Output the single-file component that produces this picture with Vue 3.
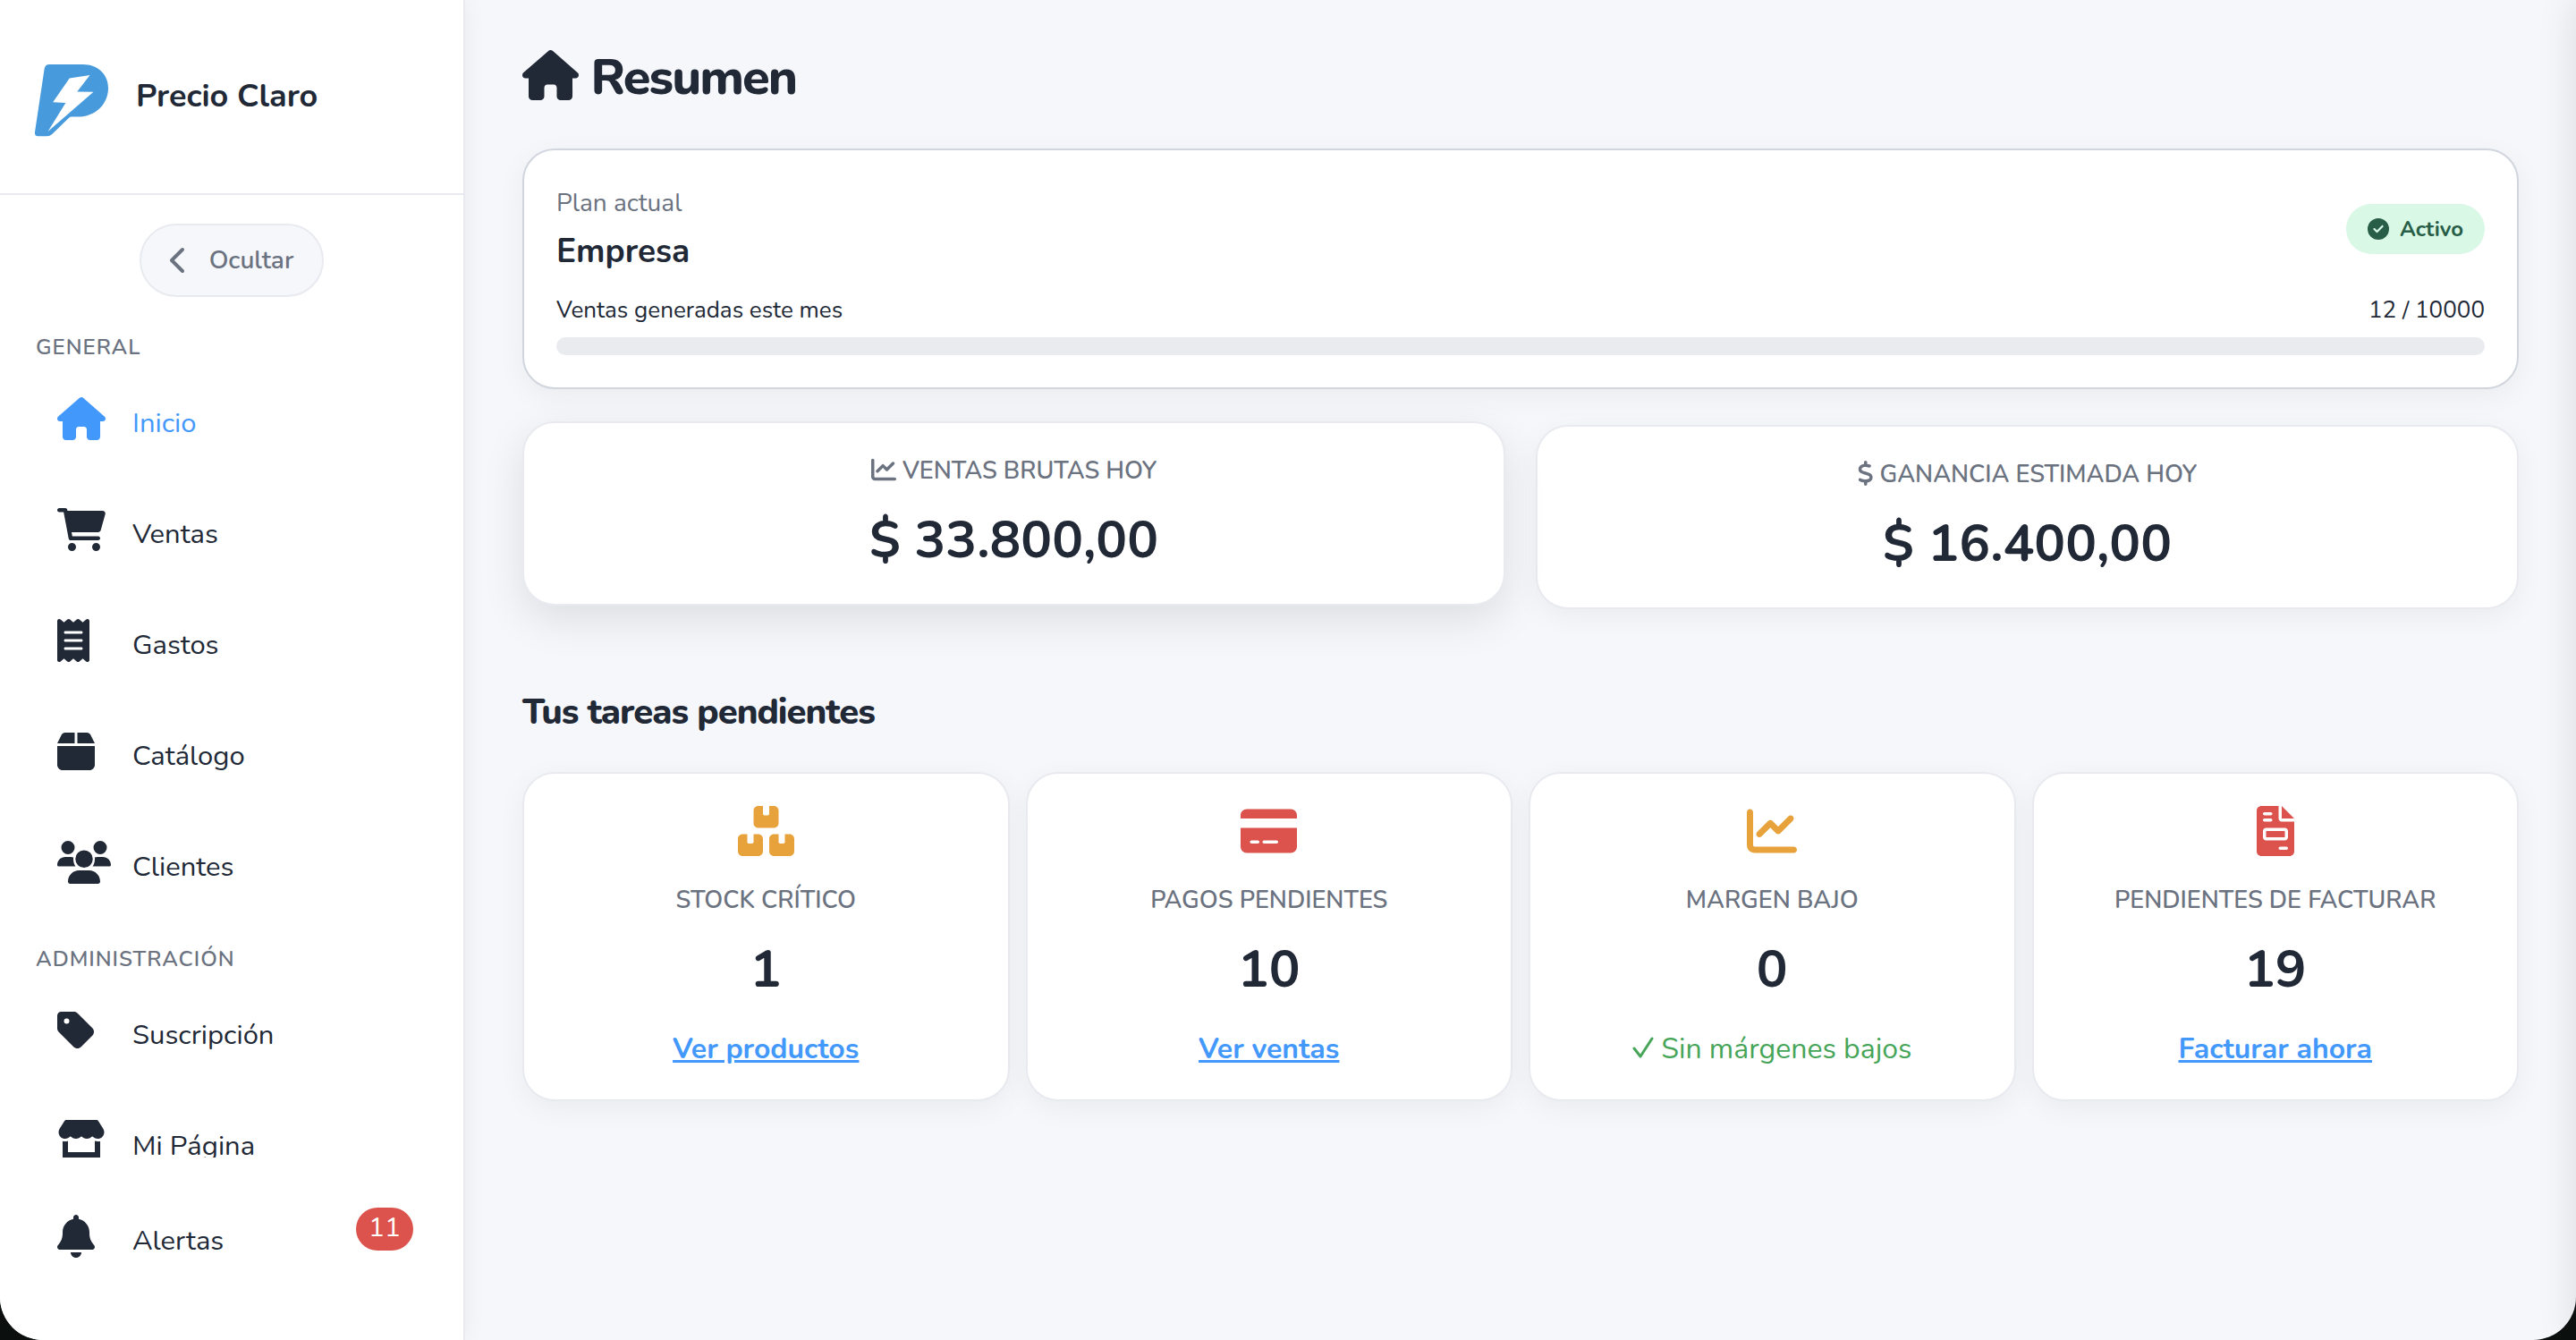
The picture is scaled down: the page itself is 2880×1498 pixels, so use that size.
<template>
  <div class="layout">
    <aside class="sidebar">
      <div class="brand">
        <svg class="logo" viewBox="110 212 254 246" aria-hidden="true">
          <path
            fill="#479bdd"
            d="M162 214H276C325 214 361 247 361 294C361 348 318 391 258 391H238Q232 391 228 395L172 449Q163 457 154 457H124Q112 457 113 443L145 230Q147 214 162 214Z"
          />
          <path fill="#fff" d="M230 261L299 250L256 306L311 307L157 441L217 344L174 342Z" />
        </svg>
        <span class="brand-name">Precio Claro</span>
      </div>

      <nav class="menu" aria-label="Menú principal">
        <button class="collapse" type="button">
          <svg class="chevron" viewBox="0 0 320 512" aria-hidden="true"><path :d="icons.chevron.d" /></svg>
          Ocultar
        </button>
        <template v-for="s in sections" :key="s.title">
          <h3 class="menu-title">{{ s.title }}</h3>
          <ul class="menu-list">
            <li v-for="m in s.items" :key="m.label">
              <a class="item" :class="{ active: m.label === current }" href="#" @click.prevent="current = m.label">
                <span class="item-icon">
                  <svg :viewBox="icons[m.icon].box" aria-hidden="true"><path :d="icons[m.icon].d" /></svg>
                </span>
                <span class="item-label">{{ m.label }}</span>
              </a>
            </li>
          </ul>
        </template>
      </nav>

      <div class="sidebar-foot">
        <a class="item" href="#">
          <span class="item-icon">
            <svg :viewBox="icons.bell.box" aria-hidden="true"><path :d="icons.bell.d" /></svg>
          </span>
          <span class="item-label">Alertas</span>
          <span class="count">11</span>
        </a>
      </div>
    </aside>

    <main class="main">
      <h1 class="title">
        <svg :viewBox="icons.house.box" aria-hidden="true"><path :d="icons.house.d" /></svg>
        Resumen
      </h1>

      <section class="card plan">
        <div class="plan-head">
          <div>
            <div class="plan-label">Plan actual</div>
            <div class="plan-name">Empresa</div>
          </div>
          <span class="status">
            <svg :viewBox="icons.check.box" aria-hidden="true"><path :d="icons.check.d" /></svg>
            Activo
          </span>
        </div>
        <div class="usage">
          <span>Ventas generadas este mes</span>
          <span>12 / 10000</span>
        </div>
        <div class="track"></div>
      </section>

      <section class="kpis">
        <article v-for="k in kpis" :key="k.label" class="card kpi" :class="{ raised: k.raised }">
          <div class="label">
            <svg :viewBox="icons[k.icon].box" aria-hidden="true"><path :d="icons[k.icon].d" /></svg>
            {{ k.label }}
          </div>
          <div class="value">{{ k.value }}</div>
        </article>
      </section>

      <h2 class="subtitle">Tus tareas pendientes</h2>

      <section class="tasks">
        <article v-for="t in tasks" :key="t.label" class="card task">
          <svg class="task-icon" :class="t.tone" :viewBox="icons[t.icon].box" aria-hidden="true">
            <path :d="icons[t.icon].d" />
          </svg>
          <div class="label">{{ t.label }}</div>
          <div class="value">{{ t.value }}</div>
          <a v-if="t.link" class="link" href="#">{{ t.link }}</a>
          <div v-else class="ok">
            <svg viewBox="0 0 24 24" aria-hidden="true"><path d="M2 13L9 22L22 2" /></svg>
            {{ t.ok }}
          </div>
        </article>
      </section>
    </main>
  </div>
</template>

<script setup>
import { ref } from 'vue'

const current = ref('Inicio')

const sections = [
  {
    title: 'GENERAL',
    items: [
      { label: 'Inicio', icon: 'house' },
      { label: 'Ventas', icon: 'cart' },
      { label: 'Gastos', icon: 'receipt' },
      { label: 'Catálogo', icon: 'box' },
      { label: 'Clientes', icon: 'users' },
    ],
  },
  {
    title: 'ADMINISTRACIÓN',
    items: [
      { label: 'Suscripción', icon: 'tag' },
      { label: 'Mi Página', icon: 'store' },
    ],
  },
]

const kpis = [
  { label: 'VENTAS BRUTAS HOY', value: '$ 33.800,00', icon: 'chart', raised: true },
  { label: 'GANANCIA ESTIMADA HOY', value: '$ 16.400,00', icon: 'dollar' },
]

const tasks = [
  { label: 'STOCK CRÍTICO', value: 1, icon: 'boxes', tone: 'warn', link: 'Ver productos' },
  { label: 'PAGOS PENDIENTES', value: 10, icon: 'card', tone: 'danger', link: 'Ver ventas' },
  { label: 'MARGEN BAJO', value: 0, icon: 'chart', tone: 'warn', ok: 'Sin márgenes bajos' },
  { label: 'PENDIENTES DE FACTURAR', value: 19, icon: 'invoice', tone: 'danger', link: 'Facturar ahora' },
]

const icons = {
  house: {
    box: '0 0 576 512',
    d: 'M575.8 255.5c0 18-15 32.1-32 32.1h-32l.7 160.2c0 2.7-.2 5.4-.5 8.1V472c0 22.1-17.9 40-40 40H456c-1.1 0-2.2 0-3.3-.1c-1.4 .1-2.8 .1-4.2 .1H416 392c-22.1 0-40-17.9-40-40V448 384c0-17.7-14.3-32-32-32H256c-17.7 0-32 14.3-32 32v64 24c0 22.1-17.9 40-40 40H160 128.1c-1.5 0-3-.1-4.5-.2c-1.2 .1-2.4 .2-3.6 .2H104c-22.1 0-40-17.9-40-40V360c0-.9 0-1.9 .1-2.8V287.6H32c-18 0-32-14-32-32.1c0-9 3-17 10-24L266.4 8c7-7 15-8 22-8s15 2 21 7L564.8 231.5c8 7 12 15 11 24z',
  },
  cart: {
    box: '0 0 576 512',
    d: 'M96 0C107.5 0 117.4 8.2 119.6 19.5L121.9 32H541.8C562.1 32 578.3 52.3 572.6 72.7L518.6 264.7C514.7 278.5 502.1 288 487.8 288H170.7L179.9 336H488C501.3 336 512 346.7 512 360C512 373.3 501.3 384 488 384H160C148.5 384 138.6 375.8 136.4 364.5L76.1 48H24C10.7 48 0 37.3 0 24C0 10.7 10.7 0 24 0H96zM128 464a48 48 0 1 1 96 0 48 48 0 1 1 -96 0zM416 464a48 48 0 1 1 96 0 48 48 0 1 1 -96 0z',
  },
  receipt: {
    box: '0 0 384 512',
    d: 'M14 2.2C22.5-1.7 32.5-.3 39.6 5.8L80 40.4 120.4 5.8c9-7.7 22.3-7.7 31.2 0L192 40.4 232.4 5.8c9-7.7 22.3-7.7 31.2 0L304 40.4 344.4 5.8c7.1-6.1 17.1-7.5 25.6-3.6s14 12.4 14 21.8V488c0 9.4-5.5 17.9-14 21.8s-18.5 2.5-25.6-3.6L304 471.6l-40.4 34.6c-9 7.7-22.3 7.7-31.2 0L192 471.6l-40.4 34.6c-9 7.7-22.3 7.7-31.2 0L80 471.6 39.6 506.2c-7.1 6.1-17.1 7.5-25.6 3.6S0 497.4 0 488V24C0 14.6 5.5 6.1 14 2.2zM96 144c-8.8 0-16 7.2-16 16s7.2 16 16 16H288c8.8 0 16-7.2 16-16s-7.2-16-16-16H96zM80 352c0 8.8 7.2 16 16 16H288c8.8 0 16-7.2 16-16s-7.2-16-16-16H96c-8.8 0-16 7.2-16 16zM96 240c-8.8 0-16 7.2-16 16s7.2 16 16 16H288c8.8 0 16-7.2 16-16s-7.2-16-16-16H96z',
  },
  box: {
    box: '0 0 448 512',
    d: 'M50.7 58.5L0 160H208V32H93.7C75.5 32 58.9 42.3 50.7 58.5zM240 160H448L397.3 58.5C389.1 42.3 372.5 32 354.3 32H240V160zm208 32H0V416c0 35.3 28.7 64 64 64H384c35.3 0 64-28.7 64-64V192z',
  },
  users: {
    box: '0 0 640 512',
    d: 'M48 80a80 80 0 1 1 160 0 80 80 0 1 1 -160 0zM432 80a80 80 0 1 1 160 0 80 80 0 1 1 -160 0zM216 216a104 104 0 1 1 208 0 104 104 0 1 1 -208 0zM0 288C0 233 43 192 96 192h64c12 0 22 2 33 6c-1 6-1 12-1 18c0 33 9 64 26 88H16c-9 0-16-7-16-16zM640 288c0-55-43-96-96-96h-64c-12 0-22 2-33 6c1 6 1 12 1 18c0 33-9 64-26 88h202c9 0 16-7 16-16zM128 485c0-74 60-133 133-133h118c73 0 133 59 133 133c0 15-12 27-27 27H155c-15 0-27-12-27-27z',
  },
  tag: {
    box: '0 0 448 512',
    d: 'M0 80V229.5c0 17 6.7 33.3 18.7 45.3l176 176c25 25 65.5 25 90.5 0L418.7 317.3c25-25 25-65.5 0-90.5l-176-176c-12-12-28.3-18.7-45.3-18.7H48C21.5 32 0 53.5 0 80zm112 32a32 32 0 1 1 0 64 32 32 0 1 1 0-64z',
  },
  store: {
    box: '0 0 576 512',
    d: 'M547.6 103.8L490.3 13.1C485.2 5 476.1 0 466.4 0H109.6C99.9 0 90.8 5 85.7 13.1L28.3 103.8c-29.6 46.8-3.4 111.9 51.9 119.4c4 .5 8.1 .8 12.1 .8c26.1 0 49.3-11.4 65.2-29c15.9 17.6 39.1 29 65.2 29c26.1 0 49.3-11.4 65.2-29c15.9 17.6 39.1 29 65.2 29c26.2 0 49.3-11.4 65.2-29c16 17.6 39.1 29 65.2 29c4.1 0 8.1-.3 12.1-.8c55.5-7.4 81.8-72.5 52.1-119.4zM499.7 254.9l-.1 0c-5.3 .7-10.7 1.1-16.2 1.1c-12.4 0-24.3-1.9-35.4-5.3V384H128V250.6c-11.2 3.5-23.2 5.4-35.6 5.4c-5.5 0-11-.4-16.3-1.1l-.1 0c-4.1-.6-8.1-1.3-12-2.3V384v64c0 35.3 28.7 64 64 64H448c35.3 0 64-28.7 64-64V384 252.6c-4 1-8 1.8-12.3 2.3z',
  },
  bell: {
    box: '0 0 448 512',
    d: 'M224 0c-17.7 0-32 14.3-32 32V51.2C119 66 64 130.6 64 208v18.8c0 47-17.3 92.4-48.5 127.6l-7.4 8.3c-8.4 9.4-10.4 22.9-5.3 34.4S19.4 416 32 416H416c12.6 0 24-7.4 29.2-18.9s3.1-25-5.3-34.4l-7.4-8.3C401.3 319.2 384 273.9 384 226.8V208c0-77.4-55-142-128-156.8V32c0-17.7-14.3-32-32-32zm45.3 493.3c12-12 18.7-28.3 18.7-45.3H224 160c0 17 6.7 33.3 18.7 45.3s28.3 18.7 45.3 18.7s33.3-6.7 45.3-18.7z',
  },
  chart: {
    box: '0 0 512 512',
    d: 'M64 64c0-17.7-14.3-32-32-32S0 46.3 0 64V400c0 44.2 35.8 80 80 80H480c17.7 0 32-14.3 32-32s-14.3-32-32-32H80c-8.8 0-16-7.2-16-16V64zm406.6 86.6c12.5-12.5 12.5-32.8 0-45.3s-32.8-12.5-45.3 0L320 210.7l-57.4-57.4c-12.5-12.5-32.8-12.5-45.3 0l-112 112c-12.5 12.5-12.5 32.8 0 45.3s32.8 12.5 45.3 0L240 221.3l57.4 57.4c12.5 12.5 32.8 12.5 45.3 0l128-128z',
  },
  dollar: {
    box: '0 0 320 512',
    d: 'M160 0c17.7 0 32 14.3 32 32V67.7c1.6 .2 3.1 .4 4.7 .7c.4 .1 .7 .1 1.1 .2l48 8.8c17.4 3.2 28.9 19.9 25.7 37.2s-19.9 28.9-37.2 25.7l-47.5-8.7c-31.3-4.6-58.9-1.5-78.3 6.2s-27.2 18.3-29 28.1c-2 10.7-.5 16.7 1.2 20.4c1.8 3.9 5.5 8.3 12.8 13.2c16.3 10.7 41.3 17.7 73.7 26.3l2.9 .8c28.6 7.6 63.6 16.8 89.6 33.8c14.2 9.3 27.6 21.9 35.9 39.5c8.5 17.9 10.3 37.9 6.4 59.2c-6.9 38-33.1 63.4-65.6 76.7c-13.7 5.6-28.6 9.2-44.4 11V480c0 17.7-14.3 32-32 32s-32-14.3-32-32V445.1c-.4-.1-.9-.1-1.3-.2l-.2 0c-24.4-3.8-64.5-14.3-91.5-26.3c-16.1-7.2-23.4-26.1-16.2-42.2s26.1-23.4 42.2-16.2c20.9 9.3 55.3 18.5 75.2 21.6c31.9 4.7 58.2 2 76-5.3c16.9-6.9 24.6-16.9 26.8-28.9c1.9-10.6 .4-16.7-1.3-20.4c-1.9-4-5.6-8.4-13-13.3c-16.4-10.7-41.5-17.7-74-26.3l-2.8-.7C119.4 279.3 84.4 270 58.4 253c-14.2-9.3-27.5-22-35.8-39.6c-8.4-17.9-10.1-37.9-6.1-59.2C23.7 116 52.3 91.2 84.8 78.3c13.3-5.3 27.9-8.9 43.2-11V32c0-17.7 14.3-32 32-32z',
  },
  boxes: {
    box: '0 0 576 512',
    d: 'M208 0h48v80c0 9 7 16 16 16h32c9 0 16-7 16-16V0h48c26.5 0 48 21.5 48 48v128c0 26.5-21.5 48-48 48H208c-26.5 0-48-21.5-48-48V48c0-26.5 21.5-48 48-48zM48 288h48v80c0 9 7 16 16 16h32c9 0 16-7 16-16v-80h48c26.5 0 48 21.5 48 48v128c0 26.5-21.5 48-48 48H48c-26.5 0-48-21.5-48-48V336c0-26.5 21.5-48 48-48zM368 288h48v80c0 9 7 16 16 16h32c9 0 16-7 16-16v-80h48c26.5 0 48 21.5 48 48v128c0 26.5-21.5 48-48 48H368c-26.5 0-48-21.5-48-48V336c0-26.5 21.5-48 48-48z',
  },
  card: {
    box: '0 0 576 512',
    d: 'M64 32C28.7 32 0 60.7 0 96v32H576V96c0-35.3-28.7-64-64-64H64zM576 224H0V416c0 35.3 28.7 64 64 64H512c35.3 0 64-28.7 64-64V224zM112 352h64c8.8 0 16 7.2 16 16s-7.2 16-16 16H112c-8.8 0-16-7.2-16-16s7.2-16 16-16zm112 16c0-8.8 7.2-16 16-16H368c8.8 0 16 7.2 16 16s-7.2 16-16 16H240c-8.8 0-16-7.2-16-16z',
  },
  invoice: {
    box: '0 0 384 512',
    d: 'M256 0v128h128zM224 128V0H48C21.5 0 0 21.5 0 48v416c0 26.5 21.5 48 48 48h288c26.5 0 48-21.5 48-48V160H256c-17.7 0-32-14.3-32-32zM80 64h64c8.8 0 16 7.2 16 16s-7.2 16-16 16H80c-8.8 0-16-7.2-16-16s7.2-16 16-16zM80 128h64c8.8 0 16 7.2 16 16s-7.2 16-16 16H80c-8.8 0-16-7.2-16-16s7.2-16 16-16zM96 224h192c17.7 0 32 14.3 32 32v64c0 17.7-14.3 32-32 32H96c-17.7 0-32-14.3-32-32v-64c0-17.7 14.3-32 32-32zM96 256v64h192v-64zM240 416h64c8.8 0 16 7.2 16 16s-7.2 16-16 16h-64c-8.8 0-16-7.2-16-16s7.2-16 16-16z',
  },
  check: {
    box: '0 0 512 512',
    d: 'M256 512A256 256 0 1 0 256 0a256 256 0 1 0 0 512zM369 209L241 337c-9.4 9.4-24.6 9.4-33.9 0l-64-64c-9.4-9.4-9.4-24.6 0-33.9s24.6-9.4 33.9 0l47 47L335 175c9.4-9.4 24.6-9.4 33.9 0s9.4 24.6 0 33.9z',
  },
  chevron: {
    d: 'M9.4 233.4c-12.5 12.5-12.5 32.8 0 45.3l192 192c12.5 12.5 32.8 12.5 45.3 0s12.5-32.8 0-45.3L77.3 256 246.6 86.6c12.5-12.5 12.5-32.8 0-45.3s-32.8-12.5-45.3 0l-192 192z',
  },
}
</script>

<style>
body {
  margin: 0;
  background: #0b100f;
}
</style>

<style scoped>
.layout {
  position: relative;
  display: flex;
  min-height: 100vh;
  overflow: hidden;
  border-radius: 0 0 48px 48px;
  background: #f5f7fb;
  color: #212836;
  font-family: Nunito, Lato, "Open Sans", sans-serif;
}

/* edge shadow of the closed side panel */
.layout::after {
  content: "";
  position: absolute;
  left: 100%;
  top: 0;
  bottom: 0;
  width: 40px;
  box-shadow: -4px 0 40px rgba(0, 0, 0, 0.1);
}

svg {
  fill: currentColor;
  fill-rule: evenodd;
}

.sidebar {
  flex: none;
  display: flex;
  flex-direction: column;
  box-sizing: border-box;
  width: 520px;
  height: 100vh;
  background: #fff;
  border-right: 2px solid #e9eaf0;
  box-shadow: 0 0 24px rgba(0, 0, 0, 0.06);
}

.brand {
  display: flex;
  align-items: center;
  gap: 30px;
  padding: 70px 38px 62px;
  border-bottom: 2px solid #e9eaf0;
}

.logo {
  width: 84px;
  height: 84px;
}

.brand-name {
  padding-bottom: 8px;
  font-size: 36px;
  line-height: 44px;
  font-weight: 700;
}

.menu {
  flex: 1;
  min-height: 0;
  overflow: hidden;
}

.collapse {
  display: flex;
  align-items: center;
  gap: 24px;
  height: 82px;
  margin: 32px auto 6px;
  padding: 0 32px;
  border: 2px solid #e9eaf0;
  border-radius: 41px;
  background: #f5f7fb;
  color: #6b7280;
  font: inherit;
  font-size: 28px;
  font-weight: 600;
  cursor: pointer;
}

.chevron {
  width: 20px;
  height: 32px;
}

.menu-title {
  margin: 0;
  padding: 35px 40px 7px;
  color: #6b7280;
  font-size: 24px;
  line-height: 30px;
  font-weight: 600;
  letter-spacing: 1px;
}

.menu-list {
  display: flex;
  flex-direction: column;
  gap: 8px;
  margin: 0;
  padding: 0;
  list-style: none;
}

.item {
  position: relative;
  display: flex;
  align-items: flex-end;
  gap: 20px;
  padding: 34px 56px 34px 64px;
  color: inherit;
  font-size: 31px;
  text-decoration: none;
}

.item.active {
  color: #4398fb;
}

.item-icon {
  width: 64px;
  height: 48px;
}

.item-icon svg {
  display: block;
  height: 48px;
}

.item-label {
  line-height: 38px;
}

.sidebar-foot {
  padding: 30px 0 58px;
}

.count {
  position: absolute;
  top: 26px;
  right: 56px;
  padding: 0 14px 2px;
  border-radius: 24px;
  background: #dc524d;
  color: #fff;
  font-size: 30px;
  line-height: 46px;
}

.main {
  flex: 1;
  min-width: 0;
  padding: 52px 64px 48px;
}

.title {
  margin: 0 0 44px;
  font-size: 56px;
  line-height: 70px;
  font-weight: 800;
  letter-spacing: -2px;
}

.title svg {
  height: 56px;
  vertical-align: -7px;
}

.card {
  border: 2px solid #e9eaf0;
  border-radius: 36px;
  background: #fff;
  box-shadow: 0 8px 32px rgba(0, 0, 0, 0.05);
}

.plan {
  padding: 36px;
  border-color: #d1d5de;
}

.plan-head {
  display: flex;
  align-items: center;
  justify-content: space-between;
}

.plan-label {
  margin-bottom: 4px;
  color: #6b7280;
  font-size: 28px;
  line-height: 46px;
}

.plan-name {
  font-size: 37px;
  line-height: 54px;
  font-weight: 700;
}

.status {
  display: flex;
  align-items: center;
  gap: 12px;
  padding: 0 24px;
  border-radius: 28px;
  background: #d9f8e6;
  color: #285d48;
  font-size: 24px;
  line-height: 56px;
  font-weight: 700;
}

.status svg {
  width: 24px;
  height: 24px;
}

.usage {
  display: flex;
  justify-content: space-between;
  margin: 20px 0 11px;
  font-size: 26px;
  line-height: 38px;
}

.track {
  height: 20px;
  border-radius: 10px;
  background: #eaebef;
}

.kpis {
  display: grid;
  grid-template-columns: repeat(2, 1fr);
  gap: 34px;
  margin-top: 40px;
}

.kpi {
  padding: 34px 32px 30px;
  text-align: center;
}

.kpi.raised {
  transform: translateY(-4px);
  box-shadow: 0 16px 48px rgba(0, 0, 0, 0.1);
}

.label {
  color: #6b7280;
  font-size: 27px;
  line-height: 40px;
  font-weight: 600;
}

.label svg {
  height: 28px;
  vertical-align: -4px;
}

.value {
  margin-top: 16px;
  font-size: 58px;
  line-height: 82px;
  font-weight: 700;
}

.subtitle {
  margin: 91px 0 43px;
  font-size: 40px;
  line-height: 48px;
  font-weight: 800;
  letter-spacing: -1px;
}

.tasks {
  display: grid;
  grid-template-columns: repeat(4, 1fr);
  gap: 18px;
}

.task {
  display: flex;
  flex-direction: column;
  align-items: center;
  padding: 36px 36px 34px;
}

.task-icon {
  height: 56px;
  margin-bottom: 30px;
}

.warn {
  color: #e8a23b;
}

.danger {
  color: #dc524d;
}

.link,
.ok {
  margin-top: 26px;
  font-size: 32px;
  line-height: 44px;
}

.link {
  color: #4398fb;
  font-weight: 700;
}

.ok {
  color: #46a558;
}

.ok svg {
  width: 24px;
  height: 24px;
  fill: none;
  stroke: currentColor;
  stroke-width: 3;
  stroke-linecap: round;
  stroke-linejoin: round;
}
</style>
